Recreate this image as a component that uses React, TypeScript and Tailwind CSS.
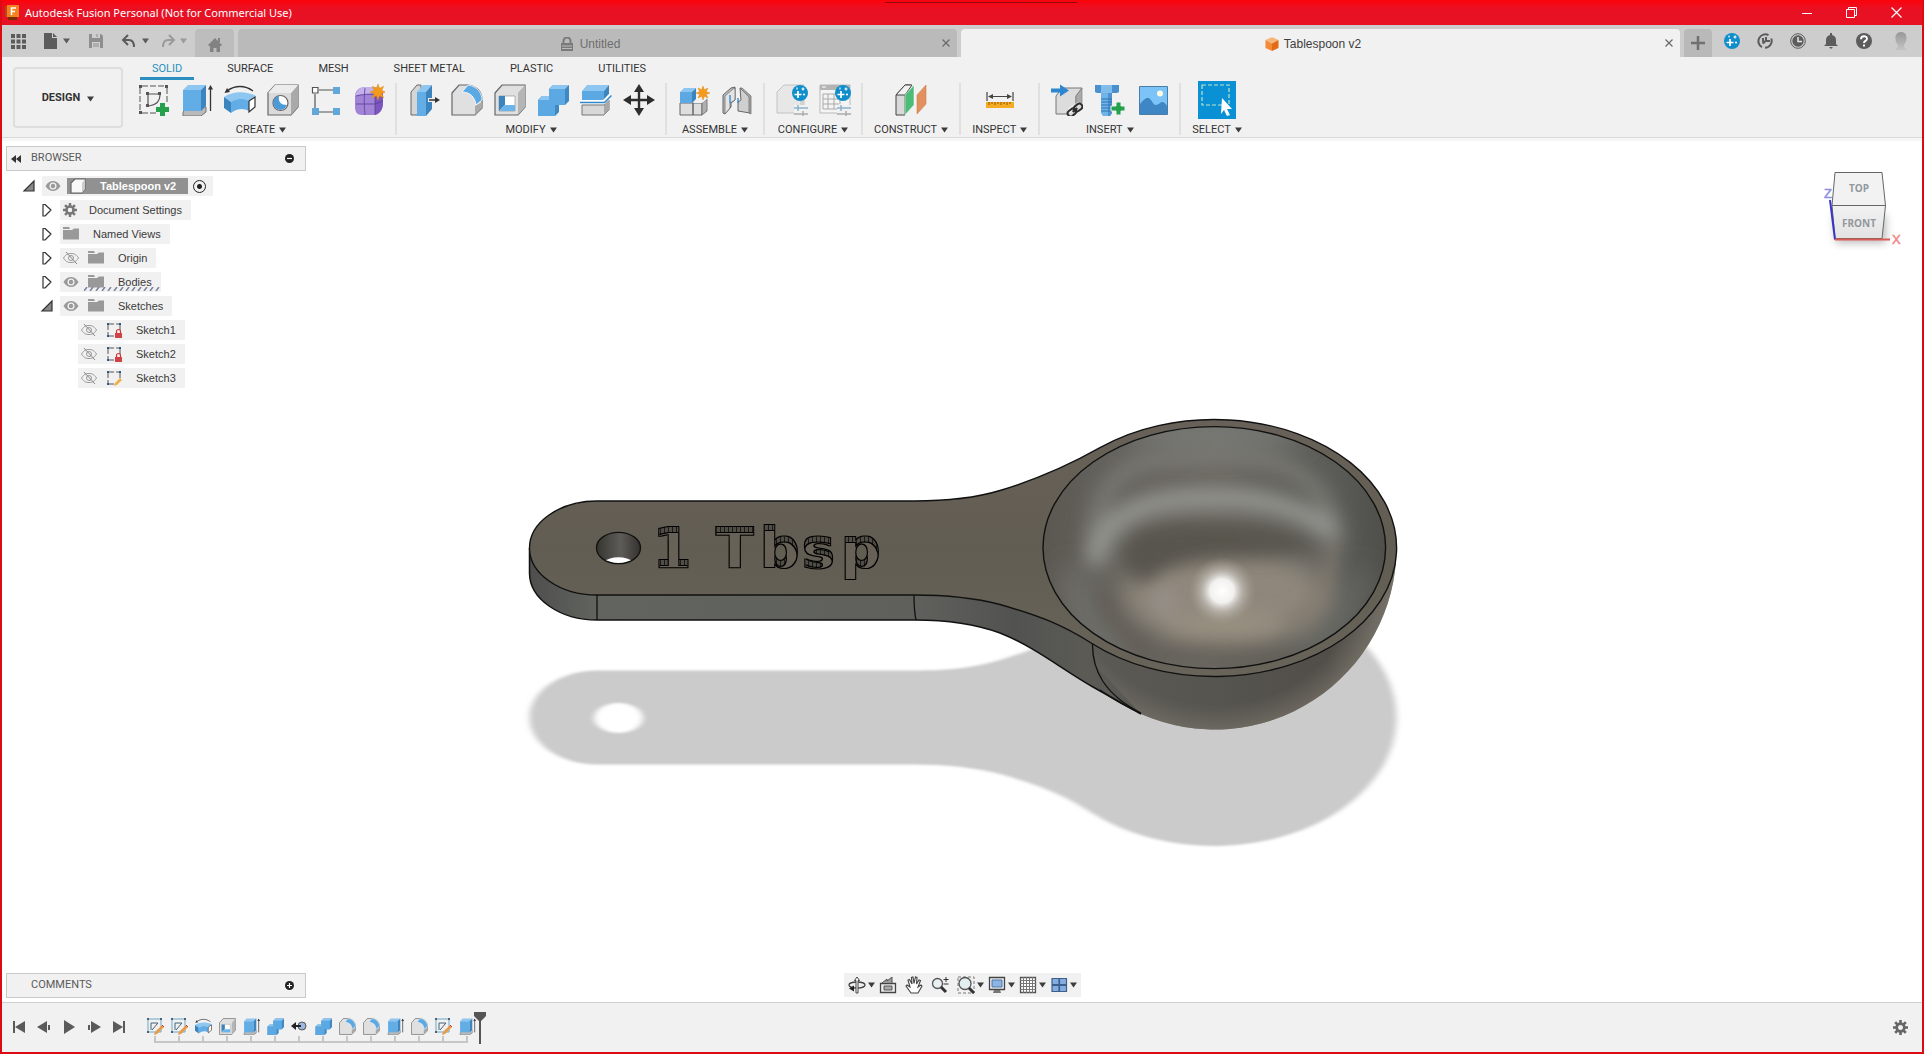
import React from "react";

type IconProps = { size?: number; className?: string };

function Svg({ size = 32, box = 32, children, className = "" }: { size?: number; box?: number; children: React.ReactNode; className?: string }) {
  return (
    <svg width={size} height={size} viewBox={`0 0 ${box} ${box}`} fill="none" className={`shrink-0 ${className}`} aria-hidden="true">
      {children}
    </svg>
  );
}

function Caret({ className = "text-[#3c3c3c]" }: { className?: string }) {
  return (
    <svg width="7" height="6" viewBox="0 0 7 6" className={`shrink-0 ${className}`} aria-hidden="true">
      <path d="M0 0.5h7L3.5 5.5z" fill="currentColor" />
    </svg>
  );
}

/* ---------- ribbon icons ---------- */

const SketchIcon = ({ size }: IconProps) => (
  <Svg size={size}>
    <path d="M4 2h23M2 4v24M4 29h14M29 4v15" stroke="#555" strokeDasharray="6 2" />
    <path d="M10 10h12M10 10v11M22 11c0 6-4 10-11 11" stroke="#555" strokeWidth="1.2" />
    <path d="M1 1h3v3H1zM27 1h3v3h-3zM1 27h3v3H1zM8 8h3v3H8zM20 8h3v3h-3zM8 20h3v3H8z" fill="#555" />
    <path d="M22 19h5v4h4v5h-4v4h-5v-4h-4v-5h4z" fill="#25a04c" />
  </Svg>
);

const ExtrudeIcon = ({ size }: IconProps) => (
  <Svg size={size}>
    <path d="M2 28l5-5h18v5l-5 4H2z" fill="#b9b9b9" stroke="#777" />
    <path d="M2 6h18v21H2z" fill="#62ade6" />
    <path d="M2 6l5-5h18l-5 5z" fill="#8dc6f0" />
    <path d="M20 6l5-5v21l-5 5z" fill="#3c84be" />
    <path d="M29.500 27V3" stroke="#333" strokeWidth="1.300" />
    <path d="M27 5.500L29.500 1l2.500 4.500z" fill="#333" />
  </Svg>
);

const RevolveIcon = ({ size }: IconProps) => (
  <Svg size={size}>
    <path d="M3 7C11 1 21 1 29 7" stroke="#333" strokeWidth="1.300" />
    <path d="M0.500 9l2.500-5 3 4z" fill="#333" />
    <path d="M0 13C9 7 22 7 32 12l-7 5c-5-3-12-3-18 1z" fill="#8dc6f0" />
    <path d="M0 13l7 5v11l-7-5z" fill="#3c84be" />
    <path d="M7 18c6-4 13-4 18-1v10c-5-3-12-3-18 2z" fill="#62ade6" />
    <path d="M25 17l6-4v10l-6 5z" fill="#fff" stroke="#333" strokeWidth="1.200" />
  </Svg>
);

const HoleIcon = ({ size }: IconProps) => (
  <Svg size={size}>
    <path d="M1 9l7-8h23v22l-7 8H1z" fill="#dadada" stroke="#666" strokeWidth="1.200" />
    <path d="M24 9l7-8v22l-7 8z" fill="#a9a9a9" />
    <path d="M1 9l7-8h23l-7 8z" fill="#ececec" />
    <circle cx="13.500" cy="19" r="7.500" fill="#fff" stroke="#666" strokeWidth="1.200" />
    <path d="M12 12a7 7 0 1 0 8 9c-6 0-9-3-8-9z" fill="#4a9bd8" />
  </Svg>
);

const PatternIcon = ({ size }: IconProps) => (
  <Svg size={size}>
    <path d="M9 6h14M5 10v14M9 28h14" stroke="#555" strokeWidth="1.200" />
    <path d="M2.500 3.500h5.500v5.500H2.500z" fill="#fff" stroke="#555" strokeWidth="1.200" />
    <path d="M23 3h7v7h-7zM2 24h7v7H2zM23 24h7v7h-7z" fill="#5fa8d8" />
  </Svg>
);

function Burst({ x, y, r = 7 }: { x: number; y: number; r?: number }) {
  const points = Array.from({ length: 16 }, (_, i) => {
    const a = (i * Math.PI) / 8;
    const d = i % 2 ? r * 0.5 : r;
    return `${x + Math.sin(a) * d},${y - Math.cos(a) * d}`;
  }).join(" ");
  return <polygon points={points} fill="#f39a1e" stroke="#e08a10" strokeWidth="0.500" />;
}

const FormIcon = ({ size }: IconProps) => (
  <Svg size={size}>
    <path d="M2 12c0-5 4-9 10-9h10c5 0 8 3 8 8v8c0 7-4 12-10 12H9c-5 0-7-3-7-8z" fill="#a184d6" />
    <path d="M2 12c1-5 5-9 10-9h10c4 0 6 2 7 4-6 3-20 2-27 5z" fill="#c4b1ea" />
    <path d="M22 11c4-1 7-3 8-4v12c0 6-3 11-8 12z" fill="#7b56bd" />
    <path d="M3 20h19l8-3M12 4c-1 8-1 18 0 27M22 10v21M3 12c8-2 13-2 19-1" stroke="#5d3ea0" strokeWidth="0.800" />
    <Burst x={25} y={8} r={8} />
  </Svg>
);

const PressPullIcon = ({ size }: IconProps) => (
  <Svg size={size}>
    <path d="M3 8l6-7h4v23l-4 7H3z" fill="#d5d5d5" stroke="#666" />
    <path d="M9 8h9v24H9z" fill="#62ade6" />
    <path d="M9 8l6-7h9l-6 7z" fill="#8dc6f0" />
    <path d="M18 8l6-7v24l-6 7z" fill="#3c84be" />
    <path d="M20 16h8" stroke="#f1f1f1" strokeWidth="4" />
    <path d="M21 16h7" stroke="#333" strokeWidth="1.500" />
    <path d="M27 13l5 3-5 3z" fill="#333" />
  </Svg>
);

const FilletIcon = ({ size }: IconProps) => (
  <Svg size={size}>
    <path d="M1 9l7-8h9c9 1 14 7 14 15v8l-7 7H1z" fill="#e0e0e0" stroke="#666" strokeWidth="1.200" />
    <path d="M24 22l7-4v6l-7 7z" fill="#aaa" />
    <path d="M11 8l6-7c9 1 14 8 14 15l-6 5C24 13 19 8 11 8z" fill="#5aa9e4" stroke="#fff" strokeWidth="0.800" />
  </Svg>
);

const ShellIcon = ({ size }: IconProps) => (
  <Svg size={size}>
    <path d="M1 9l7-8h23v22l-7 8H1z" fill="#e0e0e0" stroke="#666" strokeWidth="1.200" />
    <path d="M24 9l7-8v22l-7 8z" fill="#b5b5b5" />
    <path d="M5 12h16v15H5z" fill="#fff" stroke="#888" strokeWidth="0.600" />
    <path d="M5 12h6v9l-6 6z" fill="#3c84be" />
    <path d="M11 21h10v6H5z" fill="#6db4ea" />
  </Svg>
);

const CombineIcon = ({ size }: IconProps) => (
  <Svg size={size}>
    <path d="M1 16l4-4h7V5l4-4h16v16l-4 4h-6v7l-4 4H1z" fill="#3f88c4" />
    <path d="M1 16h11V5h16v16h-10v11H1z" fill="#5ba8e3" />
    <path d="M1 16l4-4h7v4zM12 5l4-4h16l-4 4z" fill="#8dc6f0" />
  </Svg>
);

const SplitIcon = ({ size }: IconProps) => (
  <Svg size={size}>
    <path d="M2 7l5-6h22l-5 6z" fill="#8dc6f0" />
    <path d="M2 7h22v9H2z" fill="#5ba8e3" />
    <path d="M24 7l5-6v9l-5 6z" fill="#3c84be" />
    <path d="M2 21h22l5-5v10l-5 5H2z" fill="#d8d8d8" stroke="#777" />
    <path d="M24 21l5-5v10l-5 5z" fill="#a8a8a8" />
    <path d="M0 18h24l7-7" stroke="#fff" strokeWidth="4" />
    <path d="M0 18.500h24.500l7-7" stroke="#2c86c8" strokeWidth="1.500" />
  </Svg>
);

const MoveIcon = ({ size }: IconProps) => (
  <Svg size={size}>
    <path d="M16 5v22M5 16h22" stroke="#2d2d2d" strokeWidth="2.400" />
    <path d="M16 0l5 8H11zM16 32l5-8H11zM0 16l8-5v10zM32 16l-8-5v10z" fill="#2d2d2d" />
  </Svg>
);

const ComponentIcon = ({ size }: IconProps) => (
  <Svg size={size}>
    <path d="M2 19h13v12H2zM15 19h9v12h-9z" fill="#dedede" stroke="#666" />
    <path d="M24 19l5-4v12l-5 4z" fill="#b0b0b0" stroke="#666" strokeWidth="0.800" />
    <path d="M15 19l5-4h9l-5 4z" fill="#f1f1f1" />
    <path d="M2 8h12v11H2z" fill="#5ba8e3" />
    <path d="M2 8l4-4h12l-4 4z" fill="#8dc6f0" />
    <path d="M14 8l4-4v11l-4 4z" fill="#3c84be" />
    <Burst x={25} y={9} />
  </Svg>
);

const JointIcon = ({ size }: IconProps) => (
  <Svg size={size}>
    <path d="M2 11l8-7 4-1v13l-4 3v4l-6 7-2-1z" fill="#bdbdbd" stroke="#666" />
    <path d="M4 12l8-7 2-1v12l-5 3v5l-5 6z" fill="#e4e4e4" stroke="#666" strokeWidth="0.700" />
    <path d="M19 4l10 8v17l-12-2v-9l3-2z" fill="#cfcfcf" stroke="#666" />
    <path d="M19 4l2 0 9 8v18l-2-1V13z" fill="#a8a8a8" stroke="#666" strokeWidth="0.700" />
    <path d="M9 11v8M17 14v5" stroke="#2c86c8" strokeWidth="1.300" />
  </Svg>
);

function SparkleBadge({ x, y, r }: { x: number; y: number; r: number }) {
  return (
    <g transform={`translate(${x} ${y}) scale(${r / 8})`}>
      <circle r="8" fill="#0f8ecb" />
      <path d="M-2-2v7M-5.500 1.500h7" stroke="#fff" strokeWidth="1.700" />
      <path d="M3-5.500v3M1.500-4h3M-3-5.500v2M4 0.500v2M3 1.500h2" stroke="#fff" strokeWidth="1.200" />
    </g>
  );
}

const Sliders = () => (
  <g>
    <path d="M18 21h14v11H18z" fill="#f1f1f1" />
    <path d="M18 24h14M22 21v6" stroke="#8db2cc" strokeWidth="1.500" />
    <path d="M18 30h14M27 27v5" stroke="#aaa" strokeWidth="1.500" />
  </g>
);

const ConfigureIcon = ({ size }: IconProps) => (
  <Svg size={size}>
    <path d="M1 8l7-7h20v20l-4 8H1z" fill="#e7e7e7" stroke="#c2c2c2" />
    <path d="M24 8l4-7v20l-4 8z" fill="#d2d2d2" />
    <Sliders />
    <SparkleBadge x={24} y={9} r={8} />
  </Svg>
);

const ConfigTableIcon = ({ size }: IconProps) => (
  <Svg size={size}>
    <path d="M1 1h30v28H1z" fill="#f4f4f4" stroke="#b9b9b9" />
    <path d="M1 1h30v5H1z" fill="#b4b4b4" />
    <path d="M3 3h4" stroke="#fff" />
    <path d="M4 10h22M4 15h22M4 20h16M4 25h14M4 10v15M9 10v15M15 10v15M21 10v10" stroke="#a9a9a9" />
    <Sliders />
    <SparkleBadge x={24} y={9} r={8} />
  </Svg>
);

const PlaneIcon = ({ size }: IconProps) => (
  <Svg size={size}>
    <path d="M1 11l9-10h6L10 8v23H1z" fill="#d9d9d9" stroke="#444" />
    <path d="M1 11L10 1h7l-7 10z" fill="#f2f2f2" stroke="#444" />
    <path d="M10 11l9-10v20l-9 10z" fill="#4cbc76" stroke="#fff" strokeWidth="0.500" />
    <path d="M22 11l9-10v19l-9 10z" fill="#e2905f" stroke="#d07d4a" strokeWidth="0.600" />
  </Svg>
);

const MeasureIcon = ({ size }: IconProps) => (
  <Svg size={size}>
    <path d="M3 8v9M29 8v9M5 12.500h22" stroke="#444" strokeWidth="1.200" />
    <path d="M4 12.500l5-2.500v5zM28 12.500l-5-2.500v5z" fill="#444" />
    <path d="M2 18h28v6H2z" fill="#f5ab22" />
    <path d="M5 18v3M8 18v2M11 18v3M14 18v2M17 18v3M20 18v2M23 18v3M26 18v2" stroke="#8a5a00" />
  </Svg>
);

const LinkInsertIcon = ({ size }: IconProps) => (
  <Svg size={size}>
    <path d="M5 12l6-8h20l-6 8v18H5z" fill="#dcdcdc" stroke="#777" />
    <path d="M25 12l6-8v18l-6 8z" fill="#aaa" stroke="#777" strokeWidth="0.600" />
    <path d="M0 4.500h9V0.500l9 6-9 6V8.500H0z" fill="#2c86d0" />
    <path d="M17 24l10-6 5 2v12H17z" fill="#f1f1f1" opacity="0.700" />
    <g stroke="#2d2d2d" strokeWidth="2" transform="rotate(-38 24 26)">
      <rect x="15.500" y="23" width="9" height="6" rx="3" />
      <rect x="23.500" y="23" width="9" height="6" rx="3" />
      <path d="M21 26h6" />
    </g>
  </Svg>
);

const BoltIcon = ({ size }: IconProps) => (
  <Svg size={size}>
    <path d="M1 1h24v7l-2 1H3L1 8z" fill="#4a90cc" />
    <path d="M7 1h11v8H7z" fill="#7fbcec" />
    <path d="M7 9h11v20l-2 3H9l-2-3z" fill="#6fb3e8" />
    <path d="M14 9h4v20l-2 3h-2z" fill="#4c93d0" />
    <path d="M7 15h11M7 18h11M7 21h11M7 24h11M7 27h11" stroke="#2f74ad" />
    <path d="M22 18h5v4h4v5h-4v4h-5v-4h-5v-5h5z" fill="#25a04c" stroke="#f1f1f1" />
  </Svg>
);

const ImageIcon = ({ size }: IconProps) => (
  <Svg size={size}>
    <path d="M2.500 2.500h28v28h-28z" fill="#7cc4f7" stroke="#4a7ea8" />
    <path d="M3 20c3-3 6-7 9-6 3 2 4 7 7 7s4-3 6-3 4 2 5 4v8H3z" fill="#3f86c4" />
    <circle cx="23" cy="9.500" r="3" fill="#fffbe0" />
  </Svg>
);

const SelectIcon = () => (
  <Svg size={38} box={38}>
    <path d="M0 0h38v38H0z" fill="#0a90d4" />
    <path d="M4 4h27v20H4z" stroke="#bde6c8" strokeWidth="1.200" strokeDasharray="4 2" />
    <path d="M24 17l10 11h-5l3 6-3 1-3-6-3 4z" fill="#fff" />
  </Svg>
);

/* ---------- timeline icons ---------- */

const TimelineSketchIcon = () => (
  <Svg size={18} box={18}>
    <path d="M2 2h13v13H2z" stroke="#6ea4c8" />
    <path d="M5 6h7M5 6v7M12 6l-6 7" stroke="#47637a" />
    <path d="M1 1h2v2H1zM14 1h2v2h-2zM1 14h2v2H1z" fill="#47637a" />
    <path d="M16 8l2 2-7 7-3 1 1-3z" fill="#e79b45" />
    <path d="M16 8l2 2" stroke="#c33" />
  </Svg>
);

const TimelineOffsetIcon = () => (
  <Svg size={18} box={18}>
    <circle cx="12" cy="9" r="4" fill="#9fb6e0" stroke="#555" />
    <path d="M4 9h7" stroke="#222" strokeWidth="2" />
    <path d="M1 9l5-4v8z" fill="#222" />
  </Svg>
);

/* ---------- browser icons ---------- */

const Eye = () => (
  <Svg size={16} box={16}>
    <path d="M0.500 8C3 4 5.500 3 8 3s5 1 7.500 5C13 12 10.500 13 8 13S3 12 0.500 8z" fill="#999" />
    <circle cx="8" cy="8" r="3.500" fill="#f1f1f1" />
    <circle cx="8" cy="8" r="2.200" fill="#999" />
  </Svg>
);

const EyeOff = () => (
  <Svg size={16} box={16}>
    <path d="M0.500 8C3 4 5.500 3.500 8 3.500s5 .5 7.500 4.500C13 12 10.500 12.500 8 12.500S3 12 0.500 8z" stroke="#999" />
    <circle cx="8" cy="8" r="2.500" stroke="#999" />
    <path d="M3 2l11 12" stroke="#888" />
  </Svg>
);

const Folder = () => (
  <Svg size={16} box={16}>
    <path d="M0 1h6l1 2H0zM0 4h9l2-1.500h5V13.500H0z" fill="#999" />
  </Svg>
);

const Cog = ({ size = 14, color = "#777" }: { size?: number; color?: string }) => (
  <Svg size={size} box={16}>
    <circle cx="8" cy="8" r="4" stroke={color} strokeWidth="3" />
    <g stroke={color} strokeWidth="2.800">
      <path d="M8 0v4M8 12v4M0 8h4M12 8h4M2.300 2.300l3 3M10.700 10.700l3 3M2.300 13.700l3-3M10.700 5.300l3-3" />
    </g>
    <circle cx="8" cy="8" r="2.400" fill="#f1f1f1" />
  </Svg>
);

const BodyCube = () => (
  <Svg size={18} box={18}>
    <path d="M2 6l4-4h10v10l-3 4H2z" fill="#f8f8f8" stroke="#666" strokeWidth="1.200" />
    <path d="M13 6l3-4v10l-3 4z" fill="#ccc" />
  </Svg>
);

const TreeSketch = ({ locked }: { locked: boolean }) => (
  <Svg size={16} box={16}>
    <path d="M3 2h10M2 3v10M14 3v5M3 14h5" stroke="#555" strokeDasharray="5 2" />
    <path d="M1 1h2v2H1zM13 1h2v2h-2zM1 13h2v2H1z" fill="#2f5a86" />
    {locked ? (
      <>
        <path d="M10.500 11V9.500a2 2 0 0 1 4 0V11" stroke="#c33" strokeWidth="1.200" />
        <path d="M9 11h7v5H9z" fill="#cf4347" />
      </>
    ) : (
      <path d="M14 8l2 2-5 5-3 1 1-3z" fill="#efb04a" />
    )}
  </Svg>
);

const Closed = () => (
  <Svg size={14} box={14}>
    <path d="M3 1.500h2l6 5.500-6 6H3z" fill="#fff" stroke="#333" strokeWidth="1.200" strokeLinejoin="round" />
  </Svg>
);

const Open = () => (
  <Svg size={14} box={14}>
    <path d="M12 2v10H2z" fill="#888" stroke="#333" strokeWidth="1.200" />
  </Svg>
);

/* ---------- title and tab bars ---------- */

function TitleBar() {
  return (
    <header className="flex h-[25px] items-center justify-between bg-gradient-to-b from-[#fb0208] to-[#e81123] to-40% pl-[3px] pr-[3px] text-white">
      <div className="flex items-center gap-[6px]">
        <svg width="14" height="16" viewBox="0 0 14 16" aria-hidden="true">
          <path d="M0 1h3v11H0z" fill="#b54a10" />
          <path d="M2 0h12v12H2z" fill="#f58220" />
          <path d="M6.500 10V3h4.500M6.500 6.500h3.500" stroke="#fff" strokeWidth="1.500" fill="none" />
          <path d="M3 12h9v3H3z" fill="#7a2c05" />
        </svg>
        <h1 className="pt-px font-['Noto_Sans',sans-serif] text-[11px] leading-4">Autodesk Fusion Personal (Not for Commercial Use)</h1>
      </div>
      <div className="flex">
        <button aria-label="Minimize" className="flex h-6 w-[45px] items-center justify-center">
          <Svg size={10} box={10}><path d="M0 5.500h10" stroke="#fff" /></Svg>
        </button>
        <button aria-label="Restore" className="flex h-6 w-[45px] items-center justify-center">
          <Svg size={11} box={11}><path d="M0.500 2.500h8v8h-8zM2.500 2.500v-2h8v8h-2" stroke="#fff" /></Svg>
        </button>
        <button aria-label="Close" className="flex h-6 w-[45px] items-center justify-center">
          <Svg size={11} box={11}><path d="M0.500 0.500l10 10M10.500 0.500l-10 10" stroke="#fff" strokeWidth="1.200" /></Svg>
        </button>
      </div>
      <div className="absolute left-[46%] top-[2px] h-px w-48 bg-[#8a0a10]" />
    </header>
  );
}

const CloseGlyph = () => (
  <Svg size={8} box={8}><path d="M0.500 0.500l7 7M7.500 0.500l-7 7" stroke="#6b6b6b" strokeWidth="1.300" /></Svg>
);

function TabBar() {
  return (
    <div className="flex h-8 items-end bg-[#cdcdcd] text-[12px] text-[#3d3d3d]">
      <div className="flex h-8 w-[193px] shrink-0 items-center pl-[9px] text-[#5c5c5c]">
        <button aria-label="Data panel" className="mr-[17px]">
          <Svg size={15} box={15}>
            <path d="M0 0h4v4H0zM5.500 0h4v4h-4zM11 0h4v4h-4zM0 5.500h4v4H0zM5.500 5.500h4v4h-4zM11 5.500h4v4h-4zM0 11h4v4H0zM5.500 11h4v4h-4zM11 11h4v4h-4z" fill="#5c5c5c" />
          </Svg>
        </button>
        <button aria-label="File" className="mr-[19px] flex items-center gap-1">
          <Svg size={16} box={16}><path d="M1 0h8v5h5v11H1z" fill="#5c5c5c" /><path d="M10 0l4 4h-4z" fill="#5c5c5c" /></Svg>
          <Caret className="text-[#5c5c5c]" />
        </button>
        <button aria-label="Save" className="mr-[18px]">
          <Svg size={14} box={14}>
            <path d="M0 0h12l2 2v12H0z" fill="#8e8e8e" />
            <path d="M3 0h8v4H3zM3 8h8v6H3z" fill="#cdcdcd" />
            <path d="M4 10h6M4 12h6M8 0v3" stroke="#8e8e8e" />
          </Svg>
        </button>
        <button aria-label="Undo" className="mr-[12px] flex items-center gap-[6px]">
          <Svg size={15} box={15}><path d="M2 6h6c4 0 5 3 5 7M7 1L2 6l5 5" stroke="#5c5c5c" strokeWidth="2" /></Svg>
          <Caret className="text-[#5c5c5c]" />
        </button>
        <button aria-label="Redo" className="flex items-center gap-[4px]">
          <Svg size={15} box={15}><path d="M13 6H7c-4 0-5 3-5 7M8 1l5 5-5 5" stroke="#9b9b9b" strokeWidth="2" /></Svg>
          <Caret className="text-[#9b9b9b]" />
        </button>
      </div>
      <button aria-label="Home" className="flex h-7 w-[39px] shrink-0 items-center justify-center rounded-t bg-[#bdbdbd]">
        <Svg size={16} box={16} className="mt-1"><path d="M8 1l7 7-1 1h-1v6H9.500v-4h-3v4H3V9H2L1 8zM11 1h2v4h-2z" fill="#828282" /></Svg>
      </button>
      <div className="ml-1 flex h-7 flex-1 items-center rounded-t bg-[#bababa] pr-[7px] text-[#6e6e6e]">
        <button className="flex flex-1 items-center justify-center gap-[6px] pt-[2px]">
          <Svg size={14} box={14}>
            <path d="M3.500 7V4a3.500 3.500 0 0 1 7 0v3" stroke="#7a7a7a" strokeWidth="2" />
            <path d="M1 6h12v8H1z" fill="#7a7a7a" />
            <path d="M2 9h10M2 11.500h10" stroke="#bababa" />
          </Svg>
          Untitled
        </button>
        <button aria-label="Close Untitled"><CloseGlyph /></button>
      </div>
      <div className="ml-[4px] flex h-7 flex-1 items-center rounded-t bg-[#f1f1f1] pr-[7px]">
        <button className="flex flex-1 items-center justify-center gap-[5px] pt-[2px]">
          <Svg size={14} box={14}>
            <path d="M7 0l6.500 3L7 6.500 0.500 3z" fill="#f9b67c" />
            <path d="M0.500 3L7 6.500V14L0.500 11z" fill="#f28a38" />
            <path d="M13.500 3L7 6.500V14l6.500-3z" fill="#e26b14" />
          </Svg>
          Tablespoon v2
        </button>
        <button aria-label="Close Tablespoon v2"><CloseGlyph /></button>
      </div>
      <button aria-label="New tab" className="ml-1 flex h-7 w-7 shrink-0 items-center justify-center rounded-t bg-[#b9b9b9]">
        <Svg size={14} box={14}><path d="M7 0v14M0 7h14" stroke="#707070" strokeWidth="2.500" /></Svg>
      </button>
      <div className="flex h-8 w-[210px] shrink-0 items-center pl-[3px]">
        <button aria-label="Extensions" className="flex w-[33px] justify-center">
          <Svg size={16} box={16}><SparkleBadge x={8} y={8} r={8} /></Svg>
        </button>
        <button aria-label="Connection" className="flex w-[33px] justify-center">
          <Svg size={16} box={16}>
            <path d="M5 14.200A6.800 6.800 0 1 1 11.500 2.200M14.200 5.500A6.800 6.800 0 0 1 8 14.800" stroke="#5c5c5c" strokeWidth="2" />
            <path d="M6 5v3l2 2M9 4v4h4M8 8l-2.500 2.500" stroke="#5c5c5c" strokeWidth="2" />
          </Svg>
        </button>
        <button aria-label="Job status" className="flex w-[33px] justify-center">
          <Svg size={16} box={16}>
            <circle cx="8" cy="8" r="7.300" stroke="#5c5c5c" />
            <circle cx="8" cy="8" r="5.700" fill="#5c5c5c" />
            <path d="M8 4v4.500h4" stroke="#e5e5e5" strokeWidth="1.500" />
          </Svg>
        </button>
        <button aria-label="Notifications" className="flex w-[33px] justify-center">
          <Svg size={16} box={16}><path d="M7 0h2v2c3 .5 4 3 4 5v4l2 2H1l2-2V7c0-2 1-4.500 4-5zM6 14h4l-2 2z" fill="#5c5c5c" /></Svg>
        </button>
        <button aria-label="Help" className="flex w-[33px] justify-center">
          <Svg size={16} box={16}>
            <circle cx="8" cy="8" r="8" fill="#5c5c5c" />
            <path d="M5 6.200c0-4 6-3.800 6-.5C11 8 8 7.800 8 10" stroke="#fff" strokeWidth="1.900" />
            <path d="M7 11.500h2v2H7z" fill="#fff" />
          </Svg>
        </button>
        <button aria-label="Account" className="flex w-[42px] justify-center">
          <svg width="18" height="18" viewBox="0 0 18 18" aria-hidden="true">
            <defs>
              <linearGradient id="avatar" x1="0" x2="0" y1="0" y2="1">
                <stop offset="0" stopColor="#979797" />
                <stop offset="1" stopColor="#c4c4c4" />
              </linearGradient>
            </defs>
            <path d="M9 0c4 0 6 3 5.500 7-.3 3-1.500 4-2.500 6v2l3 3H3l3-3v-2C4.500 11 3.700 10 3.500 7 3 3 5 0 9 0z" fill="url(#avatar)" />
          </svg>
        </button>
      </div>
    </div>
  );
}

/* ---------- ribbon ---------- */

type Tool = { name: string; icon: (p: IconProps) => React.ReactNode };
type ToolGroup = { label: string; tools: Tool[] };

const groups: ToolGroup[] = [
  {
    label: "CREATE",
    tools: [
      { name: "Create Sketch", icon: SketchIcon },
      { name: "Extrude", icon: ExtrudeIcon },
      { name: "Revolve", icon: RevolveIcon },
      { name: "Hole", icon: HoleIcon },
      { name: "Rectangular Pattern", icon: PatternIcon },
      { name: "Create Form", icon: FormIcon },
    ],
  },
  {
    label: "MODIFY",
    tools: [
      { name: "Press Pull", icon: PressPullIcon },
      { name: "Fillet", icon: FilletIcon },
      { name: "Shell", icon: ShellIcon },
      { name: "Combine", icon: CombineIcon },
      { name: "Split Body", icon: SplitIcon },
      { name: "Move", icon: MoveIcon },
    ],
  },
  { label: "ASSEMBLE", tools: [{ name: "New Component", icon: ComponentIcon }, { name: "Joint", icon: JointIcon }] },
  { label: "CONFIGURE", tools: [{ name: "Create Configuration", icon: ConfigureIcon }, { name: "Configuration Table", icon: ConfigTableIcon }] },
  { label: "CONSTRUCT", tools: [{ name: "Offset Plane", icon: PlaneIcon }] },
  { label: "INSPECT", tools: [{ name: "Measure", icon: MeasureIcon }] },
  {
    label: "INSERT",
    tools: [
      { name: "Insert Derive", icon: LinkInsertIcon },
      { name: "Insert Fastener", icon: BoltIcon },
      { name: "Canvas", icon: ImageIcon },
    ],
  },
  { label: "SELECT", tools: [{ name: "Select", icon: SelectIcon }] },
];

const ribbonTabs = ["SOLID", "SURFACE", "MESH", "SHEET METAL", "PLASTIC", "UTILITIES"];

function Ribbon() {
  return (
    <div className="flex h-[84px] shrink-0 border-b-[3px] border-[#f6f6f6] bg-[#f1f1f1] font-[Roboto,sans-serif] text-[11px] text-[#333] shadow-[inset_0_-1px_0_#d9d9d9]">
      <button className="ml-[11px] mr-1 mt-[10px] flex h-[61px] w-[110px] shrink-0 items-center justify-center gap-[7px] rounded border-2 border-[#dedede] pt-[2px] font-bold">
        DESIGN <Caret />
      </button>
      <div className="flex flex-col">
        <nav className="flex h-[23px] shrink-0 gap-[21px] pl-[13px]">
          {ribbonTabs.map((t, i) => (
            <a
              key={t}
              href="#"
              className={i === 0 ? "border-b-[3px] border-[#2a8fc0] px-3 pt-1 leading-4 text-[#2a8fc0]" : "px-3 pt-1 leading-4"}
            >
              {t}
            </a>
          ))}
        </nav>
        <div className="flex pt-px">
          {groups.map((g, i) => (
            <React.Fragment key={g.label}>
              {i > 0 && <div className="mt-[2px] h-[52px] w-[2px] bg-[#e0e0e0]" />}
              <section className="flex flex-col items-center px-[5px]">
                <div className="flex h-[38px] items-center">
                  {g.tools.map(({ name, icon: Icon }) => (
                    <button key={name} aria-label={name} className="flex w-[43px] justify-center">
                      <Icon />
                    </button>
                  ))}
                </div>
                <button className="mt-[3px] flex items-center gap-1 whitespace-nowrap px-[6px] leading-4">
                  {g.label} <Caret />
                </button>
              </section>
            </React.Fragment>
          ))}
        </div>
      </div>
    </div>
  );
}

/* ---------- browser tree ---------- */

function TreeRow({ open, indent, children }: { open?: boolean; indent: string; children: React.ReactNode }) {
  return (
    <li className={`flex h-5 items-center gap-[6px] ${indent}`}>
      {open !== undefined && (
        <button aria-label={open ? "Collapse" : "Expand"} className="flex w-[14px]">
          {open ? <Open /> : <Closed />}
        </button>
      )}
      {children}
    </li>
  );
}

const chip = "flex h-5 items-center bg-[#f1f1f1] pr-[9px]";

function Browser() {
  return (
    <div className="text-[11px] text-[#3a3a3a]">
      <div className="flex h-[25px] items-center border border-[#c9cac5] bg-[#f1f1f1] pl-1 pr-[11px] font-[Roboto,sans-serif] text-[#5a5a5a]">
        <button aria-label="Collapse browser" className="mr-[10px]">
          <Svg size={10} box={10}><path d="M5 1v8L0 5zM10 1v8L5 5z" fill="#333" /></Svg>
        </button>
        <span className="flex-1">BROWSER</span>
        <button aria-label="Hide browser">
          <Svg size={9} box={9}><circle cx="4.500" cy="4.500" r="4.500" fill="#222" /><path d="M2 4.500h5" stroke="#fff" strokeWidth="1.200" /></Svg>
        </button>
      </div>
      <ul className="mt-[5px] flex flex-col gap-1">
        <TreeRow open indent="pl-4">
          <div className="flex h-5 items-center bg-[#f1f1f1] pl-[3px] pr-[7px]">
            <Eye />
            <div className="ml-[6px] flex h-4 items-center bg-[#919191] pl-[2px] pr-3 font-bold text-white">
              <BodyCube />
              <span className="ml-[13px]">Tablespoon v2</span>
            </div>
            <input
              type="radio"
              name="active"
              defaultChecked
              aria-label="Activate Tablespoon v2"
              className="ml-[5px] size-[13px] appearance-none rounded-full border border-[#222] bg-[radial-gradient(circle,#222_0_2px,transparent_3px)]"
            />
          </div>
        </TreeRow>
        <TreeRow open={false} indent="pl-[34px]">
          <div className={`${chip} pl-[3px]`}><Cog /><span className="ml-3">Document Settings</span></div>
        </TreeRow>
        <TreeRow open={false} indent="pl-[34px]">
          <div className={`${chip} pl-[3px]`}><Folder /><span className="ml-[14px]">Named Views</span></div>
        </TreeRow>
        <TreeRow open={false} indent="pl-[34px]">
          <div className={`${chip} gap-[9px] pl-[3px]`}><EyeOff /><Folder /><span className="ml-[5px]">Origin</span></div>
        </TreeRow>
        <TreeRow open={false} indent="pl-[34px]">
          <div className={`${chip} relative gap-[9px] pl-[3px]`}>
            <Eye /><Folder /><span className="ml-[5px]">Bodies</span>
            <svg width="76" height="4" viewBox="0 0 76 4" className="absolute bottom-[1px] left-6" aria-hidden="true">
              {Array.from({ length: 13 }, (_, i) => (
                <path key={i} d={`M${i * 6} 4l3-4`} stroke="#7a7f9c" strokeWidth="1.500" />
              ))}
            </svg>
          </div>
        </TreeRow>
        <TreeRow open indent="pl-[34px]">
          <div className={`${chip} gap-[9px] pl-[3px]`}><Eye /><Folder /><span className="ml-[5px]">Sketches</span></div>
        </TreeRow>
        {["Sketch1", "Sketch2", "Sketch3"].map((s, i) => (
          <TreeRow key={s} indent="pl-[72px]">
            <div className={`${chip} gap-[9px] pl-[3px]`}><EyeOff /><TreeSketch locked={i < 2} /><span className="ml-[5px]">{s}</span></div>
          </TreeRow>
        ))}
      </ul>
    </div>
  );
}

/* ---------- 3D model ---------- */

const FACE =
  "M597 501H914C950 501 975 498 1000 490.500C1035 480 1066 467 1100 447.700A182.500 128.500 0 1 1 1092 643.500C1062 624.500 1040 616 1000 604.500C975 598 945 595 914 595H597C560 595 529.500 574 529.500 548S560 501 597 501Z";

const SIDE =
  "M529.500 548V573C529.500 599 560 620 597 620H915C950 620 975 624 1000 633C1035 647 1060 668 1093 687L1141 714A182 182 0 0 0 1396.500 548Z";

function Model() {
  return (
    <svg width="924" height="600" viewBox="500 272 924 600" className="shrink-0" role="img" aria-label="Tablespoon model">
      <defs>
        <linearGradient id="face" x1="0" y1="0" x2="0" y2="1">
          <stop offset="0" stopColor="#686159" />
          <stop offset="0.500" stopColor="#625d52" />
          <stop offset="1" stopColor="#68645a" />
        </linearGradient>
        <linearGradient id="side" x1="529" x2="1397" y1="0" y2="0" gradientUnits="userSpaceOnUse">
          <stop offset="0" stopColor="#4e4f4d" />
          <stop offset="0.080" stopColor="#62645f" />
          <stop offset="0.450" stopColor="#5f605c" />
          <stop offset="0.560" stopColor="#525350" />
          <stop offset="0.640" stopColor="#5b5a55" />
          <stop offset="0.780" stopColor="#565550" />
          <stop offset="0.920" stopColor="#514e49" />
          <stop offset="1" stopColor="#6b675f" />
        </linearGradient>
        <radialGradient id="rimGlow" cx="1214" cy="548" r="182" gradientUnits="userSpaceOnUse">
          <stop offset="0.860" stopColor="#75706a" stopOpacity="0" />
          <stop offset="1" stopColor="#7d776c" stopOpacity="0.600" />
        </radialGradient>
        <linearGradient id="bore" x1="0" x2="1" y1="0" y2="0">
          <stop offset="0" stopColor="#35352f" />
          <stop offset="0.550" stopColor="#5e5c58" />
          <stop offset="1" stopColor="#32312e" />
        </linearGradient>
        <linearGradient id="bowl" x1="0" x2="1" y1="0" y2="0">
          <stop offset="0" stopColor="#5b5650" />
          <stop offset="0.150" stopColor="#62605b" />
          <stop offset="0.500" stopColor="#6b6862" />
          <stop offset="0.850" stopColor="#5a5b57" />
          <stop offset="1" stopColor="#4f4e49" />
        </linearGradient>
        <radialGradient id="spot" cx="1222" cy="591" r="34" gradientUnits="userSpaceOnUse">
          <stop offset="0" stopColor="#fff" />
          <stop offset="0.350" stopColor="#f2f1ef" />
          <stop offset="0.600" stopColor="#c4c0b9" stopOpacity="0.700" />
          <stop offset="1" stopColor="#a09a90" stopOpacity="0" />
        </radialGradient>
        <clipPath id="hole"><ellipse cx="618.500" cy="548" rx="22" ry="15.700" /></clipPath>
        <clipPath id="inner"><ellipse cx="1214.300" cy="547.600" rx="171.300" ry="121" /></clipPath>
        <filter id="soft" x="-10%" y="-10%" width="120%" height="120%"><feGaussianBlur stdDeviation="3 1" /></filter>
        <filter id="blur8" x="-50%" y="-50%" width="200%" height="200%"><feGaussianBlur stdDeviation="9" /></filter>
        <filter id="blur12" x="-50%" y="-50%" width="200%" height="200%"><feGaussianBlur stdDeviation="14" /></filter>
        {/* cuts the lettering into the face: hatched upper walls, a floor, and dark edges */}
        <filter id="engrave" filterUnits="userSpaceOnUse" x="645" y="505" width="260" height="90" colorInterpolationFilters="sRGB">
          <feOffset in="SourceAlpha" dy="6" result="floorShape" />
          <feFlood floodColor="#1c1b1a" x="648" y="508" width="1" height="84" result="stripe" />
          <feOffset in="stripe" x="648" y="508" width="4" height="84" result="stripeCell" />
          <feTile in="stripeCell" result="stripes" />
          <feFlood floodColor="#504c46" result="wallFill" />
          <feMerge result="hatch">
            <feMergeNode in="wallFill" />
            <feMergeNode in="stripes" />
          </feMerge>
          <feComposite in="hatch" in2="SourceAlpha" operator="in" result="wall" />
          <feFlood floodColor="#676157" />
          <feComposite in2="floorShape" operator="in" />
          <feComposite in2="SourceAlpha" operator="in" result="floor" />
          <feMorphology in="floorShape" operator="dilate" radius="1" />
          <feComposite in2="floorShape" operator="out" />
          <feComposite in2="SourceAlpha" operator="in" result="floorEdge" />
          <feMorphology in="SourceAlpha" operator="dilate" radius="1" />
          <feComposite in2="SourceAlpha" operator="out" result="rim" />
          <feMerge>
            <feMergeNode in="wall" />
            <feMergeNode in="floor" />
            <feMergeNode in="floorEdge" />
            <feMergeNode in="rim" />
          </feMerge>
        </filter>
      </defs>

      <g filter="url(#soft)">
        <path d={FACE} transform="translate(0 169.500)" fill="#cbcbcb" />
        <ellipse cx="618.500" cy="718" rx="24" ry="15" fill="#fff" />
      </g>

      <path d={SIDE} fill="url(#side)" />
      <path d="M1092 643L1097 667L1141 714A182 182 0 0 0 1396.500 548Z" fill="url(#rimGlow)" />
      <path d="M529.500 548V573C529.500 599 560 620 597 620H915C950 620 975 624 1000 633C1035 647 1060 668 1093 687L1141 714" fill="none" stroke="#111" strokeWidth="1.500" />
      <path d="M597 595v25M914 595c0 10 0 16 2 25M1092.500 643C1092 670 1104 694 1141 713C1128 708 1110 697 1100 690" fill="none" stroke="#111" strokeWidth="1.300" />
      <path d={FACE} fill="url(#face)" stroke="#111" strokeWidth="1.400" />

      <g clipPath="url(#hole)">
        <path d="M596 532h45v32h-45z" fill="url(#bore)" />
        <ellipse cx="618.500" cy="573" rx="22" ry="15.700" fill="#fff" />
      </g>
      <ellipse cx="618.500" cy="548" rx="22" ry="15.700" fill="none" stroke="#111" strokeWidth="1.300" />

      <text
        x="653 692 716 760 802 841"
        y="567"
        fontFamily="'DejaVu Sans', sans-serif"
        fontWeight="700"
        fontSize="55"
        fill="#000"
        filter="url(#engrave)"
      >
        1 Tbsp
      </text>

      <g clipPath="url(#inner)">
        <path d="M1040 420h350v255h-350z" fill="url(#bowl)" />
        <g filter="url(#blur12)">
          <ellipse cx="1214" cy="434" rx="90" ry="14" fill="#7a7d79" />
          <path d="M1072 570C1080 655 1150 670 1214 674" fill="none" stroke="#777974" strokeWidth="18" />
          <path d="M1362 570C1352 640 1290 668 1214 674" fill="none" stroke="#6d6f6a" strokeWidth="14" />
          <ellipse cx="1225" cy="595" rx="105" ry="48" fill="#8f877b" />
          <ellipse cx="1214" cy="657" rx="95" ry="12" fill="#5b5650" />
        </g>
        <g filter="url(#blur8)">
          <path d="M1092 555C1095 455 1150 458 1214 456C1280 454 1330 475 1338 545" fill="none" stroke="#7c7b76" strokeWidth="14" />
          <path d="M1095 565C1102 508 1155 498 1214 498C1262 497 1310 510 1332 535" fill="none" stroke="#949590" strokeWidth="20" />
          <path d="M1126 570C1114 550 1124 532 1155 526C1200 518 1270 522 1310 538C1320 550 1290 556 1230 557C1180 560 1160 568 1145 585Z" fill="#59544d" />
          <path d="M1104 590C1105 615 1125 638 1150 650" fill="none" stroke="#605a52" strokeWidth="12" />
          <ellipse cx="1165" cy="602" rx="12" ry="16" fill="#959089" />
          <path d="M1332 545C1330 590 1312 612 1290 626" fill="none" stroke="#857d72" strokeWidth="12" />
          <ellipse cx="1225" cy="624" rx="60" ry="12" fill="#989080" />
        </g>
        <circle cx="1222" cy="591" r="34" fill="url(#spot)" />
      </g>
      <ellipse cx="1214.300" cy="547.600" rx="171.300" ry="121" fill="none" stroke="#111" strokeWidth="1.400" />
    </svg>
  );
}

function ViewCube() {
  return (
    <svg width="90" height="90" viewBox="1818 160 90 90" className="absolute right-[14px] top-[19px]" role="img" aria-label="View cube">
      <defs>
        <filter id="cubeShadow" x="-50%" y="-50%" width="200%" height="200%"><feGaussianBlur stdDeviation="4" /></filter>
        <linearGradient id="front" x1="0" x2="0" y1="0" y2="1">
          <stop offset="0" stopColor="#f2f2f2" />
          <stop offset="1" stopColor="#e3e3e3" />
        </linearGradient>
      </defs>
      <path d="M1834 215h52v28h-50z" fill="#bbb" filter="url(#cubeShadow)" />
      <path d="M1835 172.500h47l3.500 33h-53.500z" fill="#f2f2f2" stroke="#666" />
      <path d="M1832 205.500h53.500l-3.500 33h-47z" fill="url(#front)" stroke="#666" />
      <path d="M1830 200l5 39.500" stroke="#3b35c8" strokeWidth="2" />
      <path d="M1835 239.500h55" stroke="#dc5a56" strokeWidth="2" />
      <g fontFamily="'Open Sans', sans-serif" fontSize="10" fontWeight="700" fill="#93979e" textAnchor="middle">
        <text x="1859" y="192">TOP</text>
        <text x="1859" y="227">FRONT</text>
      </g>
      <g fontFamily="'Liberation Sans', sans-serif" fontSize="13">
        <text x="1824" y="198" fill="#8f8fe6" stroke="#8f8fe6" strokeWidth="0.500">Z</text>
        <text x="1892" y="244" fill="#ee8a88" stroke="#ee8a88" strokeWidth="0.500">X</text>
      </g>
    </svg>
  );
}

/* ---------- navigation bar ---------- */

const navItems: { name: string; menu?: boolean; art: React.ReactNode }[] = [
  {
    name: "Orbit",
    menu: true,
    art: (
      <>
        <ellipse cx="9" cy="9" rx="8" ry="3" stroke="#444" strokeWidth="1.300" />
        <path d="M8 17V4.500H6.500L9 1l2.500 3.500H10V17z" fill="#fff" stroke="#444" />
        <path d="M1 12.500l5-3v6z" fill="#222" />
      </>
    ),
  },
  {
    name: "Look At",
    art: (
      <>
        <path d="M1.500 7.500h15v9h-15z" fill="#eee" stroke="#444" strokeWidth="1.300" />
        <path d="M3 7l5-4v2l5-4v6" fill="#999" stroke="#555" />
        <path d="M5 10h8v4H5z" fill="#aaa" stroke="#555" />
      </>
    ),
  },
  {
    name: "Pan",
    art: <path d="M6 17l-5-7 1-1 3 2-2-7 1.500-.5L7 8l-.5-6.500L8 1l1 6.500L10.500 1l1.500.500-.5 6.500L14 4l1.500.500L13 11l3-2 1 1-4 7z" fill="#fff" stroke="#444" strokeWidth="1.100" />,
  },
  {
    name: "Zoom",
    art: (
      <>
        <circle cx="6.500" cy="7.500" r="5" fill="#e8f0f2" stroke="#555" strokeWidth="1.300" />
        <path d="M10 11l5 5" stroke="#333" strokeWidth="3" />
        <path d="M15 1v5M12.500 3.500h5M12.500 8h5" stroke="#333" />
      </>
    ),
  },
  {
    name: "Fit",
    menu: true,
    art: (
      <>
        <path d="M1 1h16v16H1z" stroke="#777" strokeDasharray="3 2" />
        <circle cx="8" cy="7.500" r="6" fill="#e2efee" stroke="#555" strokeWidth="1.300" />
        <path d="M12 12l5 5" stroke="#333" strokeWidth="3" />
      </>
    ),
  },
  {
    name: "Display Settings",
    menu: true,
    art: (
      <>
        <path d="M1.500 1.500h15v12h-15z" fill="#eee" stroke="#444" strokeWidth="1.300" />
        <path d="M4 4h10v7H4z" fill="#8db4e2" stroke="#4a76ab" />
        <path d="M6 14h6l1 3H5z" fill="#777" />
      </>
    ),
  },
  {
    name: "Grid and Snaps",
    menu: true,
    art: (
      <>
        <path d="M1.500 1.500h15v15h-15z" fill="#fff" stroke="#555" strokeWidth="1.300" />
        <path d="M4.500 1v16M7.500 1v16M10.500 1v16M13.500 1v16M1 4.500h16M1 7.500h16M1 10.500h16M1 13.500h16" stroke="#777" />
      </>
    ),
  },
  {
    name: "Viewports",
    menu: true,
    art: <path d="M2 2.500h7v6H2zM9.500 2.500h7v6h-7zM2 9.500h7v6H2zM9.500 9.500h7v6h-7z" fill="#84ade0" stroke="#3d5f8d" strokeWidth="1.200" />,
  },
];

function NavBar() {
  return (
    <div className="flex h-6 items-center bg-[#f1f1f1] pl-1">
      {navItems.map((n) => (
        <button key={n.name} aria-label={n.name} className={n.menu ? "flex w-[31px] items-center gap-[2px]" : "flex w-[26px] items-center"}>
          <Svg size={18} box={18}>{n.art}</Svg>
          {n.menu && <Caret />}
        </button>
      ))}
    </div>
  );
}

/* ---------- timeline ---------- */

const features = [
  <TimelineSketchIcon />,
  <TimelineSketchIcon />,
  <RevolveIcon size={17} />,
  <ShellIcon size={17} />,
  <ExtrudeIcon size={17} />,
  <CombineIcon size={17} />,
  <TimelineOffsetIcon />,
  <CombineIcon size={17} />,
  <FilletIcon size={17} />,
  <FilletIcon size={17} />,
  <ExtrudeIcon size={17} />,
  <FilletIcon size={17} />,
  <TimelineSketchIcon />,
  <ExtrudeIcon size={17} />,
];

const playback = [
  { name: "Go to start", d: "M1 1h2v12H1zM13 1v12L3 7z" },
  { name: "Step back", d: "M10 1v12L0 7zM11 5h2v5h-2z" },
  { name: "Play", d: "M2 0l11 7-11 7z" },
  { name: "Step forward", d: "M4 1v12l10-6zM1 5h2v5H1z" },
  { name: "Go to end", d: "M1 1v12l10-6zM11 1h2v12h-2z" },
];

function Timeline() {
  return (
    <footer className="flex h-[50px] shrink-0 items-start border-t border-[#cfcfcf] bg-[#f1f1f1] pl-1 pr-[14px] pt-2">
      <div className="flex h-8 items-center">
        {playback.map((p) => (
          <button key={p.name} aria-label={p.name} className="flex w-[25px] justify-center">
            <Svg size={14} box={14}><path d={p.d} fill="#5a5a5a" /></Svg>
          </button>
        ))}
      </div>
      <div className="ml-3 flex pt-[5px]">
        {features.map((f, i) => (
          <div key={i} className="flex w-6 flex-col items-center">
            <button aria-label={`Feature ${i + 1}`} className="flex h-5 items-center">{f}</button>
            <div className="h-[5px] w-[2px] bg-[#c6c6c6]" />
            <div
              className={
                i === 0
                  ? "h-[2px] w-[13px] self-end bg-[#c6c6c6]"
                  : i === features.length - 1
                    ? "h-[2px] w-[13px] self-start bg-[#c6c6c6]"
                    : "h-[2px] w-full bg-[#c6c6c6]"
              }
            />
          </div>
        ))}
      </div>
      <button aria-label="Timeline marker" className="-ml-[5px]">
        <svg width="12" height="33" viewBox="0 0 12 33" aria-hidden="true">
          <path d="M0 1h12v4L7 10v23H5V10L0 5z" fill="#555" />
        </svg>
      </button>
      <button aria-label="Timeline settings" className="ml-auto flex h-8 items-center"><Cog size={15} color="#666" /></button>
    </footer>
  );
}

export default function App() {
  return (
    <div className="relative flex h-screen flex-col border-x-2 border-b-2 border-[#dc0a12] bg-white font-['Liberation_Sans',Arial,sans-serif]">
      <TitleBar />
      <TabBar />
      <Ribbon />
      <main className="relative flex min-h-0 flex-1 flex-col justify-between overflow-hidden px-1 pb-1 pt-[5px]">
        <div className="absolute inset-0 flex items-center justify-center">
          <Model />
        </div>
        <ViewCube />
        <div className="relative w-[300px]">
          <Browser />
        </div>
        <div className="relative grid grid-cols-[1fr_auto_1fr] items-start">
          <div className="flex h-[25px] w-[300px] items-center justify-between border border-[#c9cac5] bg-[#f1f1f1] pl-6 pr-[11px] font-[Roboto,sans-serif] text-[11px] text-[#5a5a5a]">
            COMMENTS
            <button aria-label="Show comments">
              <Svg size={9} box={9}><circle cx="4.500" cy="4.500" r="4.500" fill="#222" /><path d="M2 4.500h5M4.500 2v5" stroke="#fff" strokeWidth="1.200" /></Svg>
            </button>
          </div>
          <NavBar />
        </div>
      </main>
      <Timeline />
    </div>
  );
}
